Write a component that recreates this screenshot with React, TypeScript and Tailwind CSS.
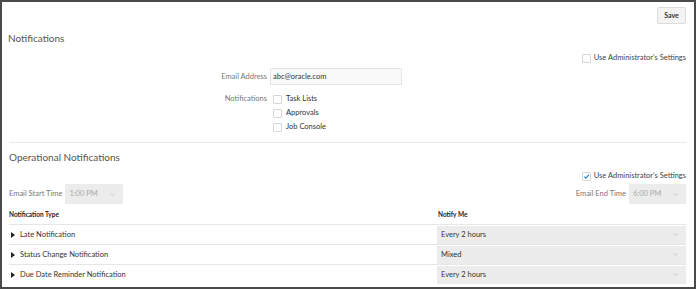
import React from 'react';

const font = { fontFamily: 'Lato, "Open Sans", sans-serif' };

function Box({ checked }: { checked?: boolean }) {
  return (
    <span className="w-[9px] h-[9px] border border-[#d6d6d6] bg-white rounded-[1px] flex items-center justify-center shrink-0">
      {checked && (
        <svg viewBox="0 0 10 10" className="w-[9px] h-[9px]">
          <path d="M1.8 5.2 L4 7.4 L8.6 2.2" fill="none" stroke="#1f7fcf" strokeWidth="1.5" />
        </svg>
      )}
    </span>
  );
}

function Caret() {
  return (
    <svg viewBox="0 0 6 4" className="w-[5px] h-[3px]">
      <path d="M0.5 0.5 L3 3.3 L5.5 0.5" fill="none" stroke="#bdbdbd" strokeWidth="0.8" />
    </svg>
  );
}

function Select({ value, className }: { value: string; className: string }) {
  return (
    <div className={`bg-[#ececec] flex items-center justify-between pl-[4px] pr-[8px] ${className}`}>
      <span>{value}</span>
      <Caret />
    </div>
  );
}

const rows = [
  { name: 'Late Notification', value: 'Every 2 hours' },
  { name: 'Status Change Notification', value: 'Mixed' },
  { name: 'Due Date Reminder Notification', value: 'Every 2 hours' },
];

export default function App() {
  return (
    <div style={font} className="w-[696px] h-[289px] bg-white border-2 border-[#4a4a4a] overflow-hidden text-[7.5px] text-[#333] flex flex-col pl-[6px] pr-[8px]">
      {/* Save */}
      <div className="flex justify-end mt-[5px]">
        <button className="w-[29px] h-[17px] bg-[#f3f3f3] border border-[#dcdcdc] rounded-[2px] text-[7px] font-bold text-[#333]">
          Save
        </button>
      </div>

      <h2 className="text-[10px] text-[#555] mt-[7px] leading-[14px]">Notifications</h2>

      <div className="flex justify-end items-center gap-[3px] mt-[7px] h-[12px]">
        <Box />
        <span className="text-[#444]">Use Administrator's Settings</span>
      </div>

      {/* form */}
      <div className="flex flex-col mt-[4px]">
        <div className="flex items-center h-[17px]">
          <span className="w-[262px] text-right pr-[3px] text-[#777]">Email Address</span>
          <div className="w-[132px] h-[17px] border border-[#e6e6e6] bg-[#f9f9f9] flex items-center pl-[2px] text-[#333]">
            abc@oracle.com
          </div>
        </div>
        <div className="flex mt-[8px]">
          <span className="w-[262px] text-right pr-[3px] text-[#777] leading-[12px]">Notifications</span>
          <div className="flex flex-col gap-[2px] pl-[3px]">
            {['Task Lists', 'Approvals', 'Job Console'].map((t) => (
              <div key={t} className="flex items-center gap-[4px] h-[12px]">
                <Box />
                <span>{t}</span>
              </div>
            ))}
          </div>
        </div>
      </div>

      <div className="border-t border-[#e8e8e8] mt-[9px] ml-[2px]" />

      <h2 className="text-[10px] text-[#555] mt-[7px] leading-[14px] ml-[1px]">Operational Notifications</h2>

      <div className="flex justify-end items-center gap-[3px] mt-[6px] h-[12px]">
        <Box checked />
        <span className="text-[#444]">Use Administrator's Settings</span>
      </div>

      <div className="flex items-center justify-between mt-[2px] ml-[1px] h-[20px] text-[#777]">
        <div className="flex items-center gap-[3px]">
          <span>Email Start Time</span>
          <Select value="1:00 PM" className="w-[58px] h-[20px] text-[#aaa]" />
        </div>
        <div className="flex items-center gap-[3px]">
          <span>Email End Time</span>
          <Select value="6:00 PM" className="w-[57px] h-[20px] text-[#aaa]" />
        </div>
      </div>

      <div className="flex mt-[6px] ml-[1px] h-[10px] items-center text-[6.5px] font-bold text-[#222]">
        <span className="w-[429px]">Notification Type</span>
        <span>Notify Me</span>
      </div>

      <div className="flex flex-col mt-[4px] ml-[1px]">
        {rows.map((r) => (
          <div key={r.name} className="flex items-center h-[20px] border-t border-[#e6e6e6]">
            <div className="w-[428px] flex items-center gap-[5px] pl-[2px]">
              <svg viewBox="0 0 4 6" className="w-[4px] h-[6px]">
                <path d="M0 0 L4 3 L0 6 Z" fill="#222" />
              </svg>
              <span>{r.name}</span>
            </div>
            <Select value={r.value} className="flex-1 h-[18px] text-[#333]" />
          </div>
        ))}
      </div>
    </div>
  );
}
